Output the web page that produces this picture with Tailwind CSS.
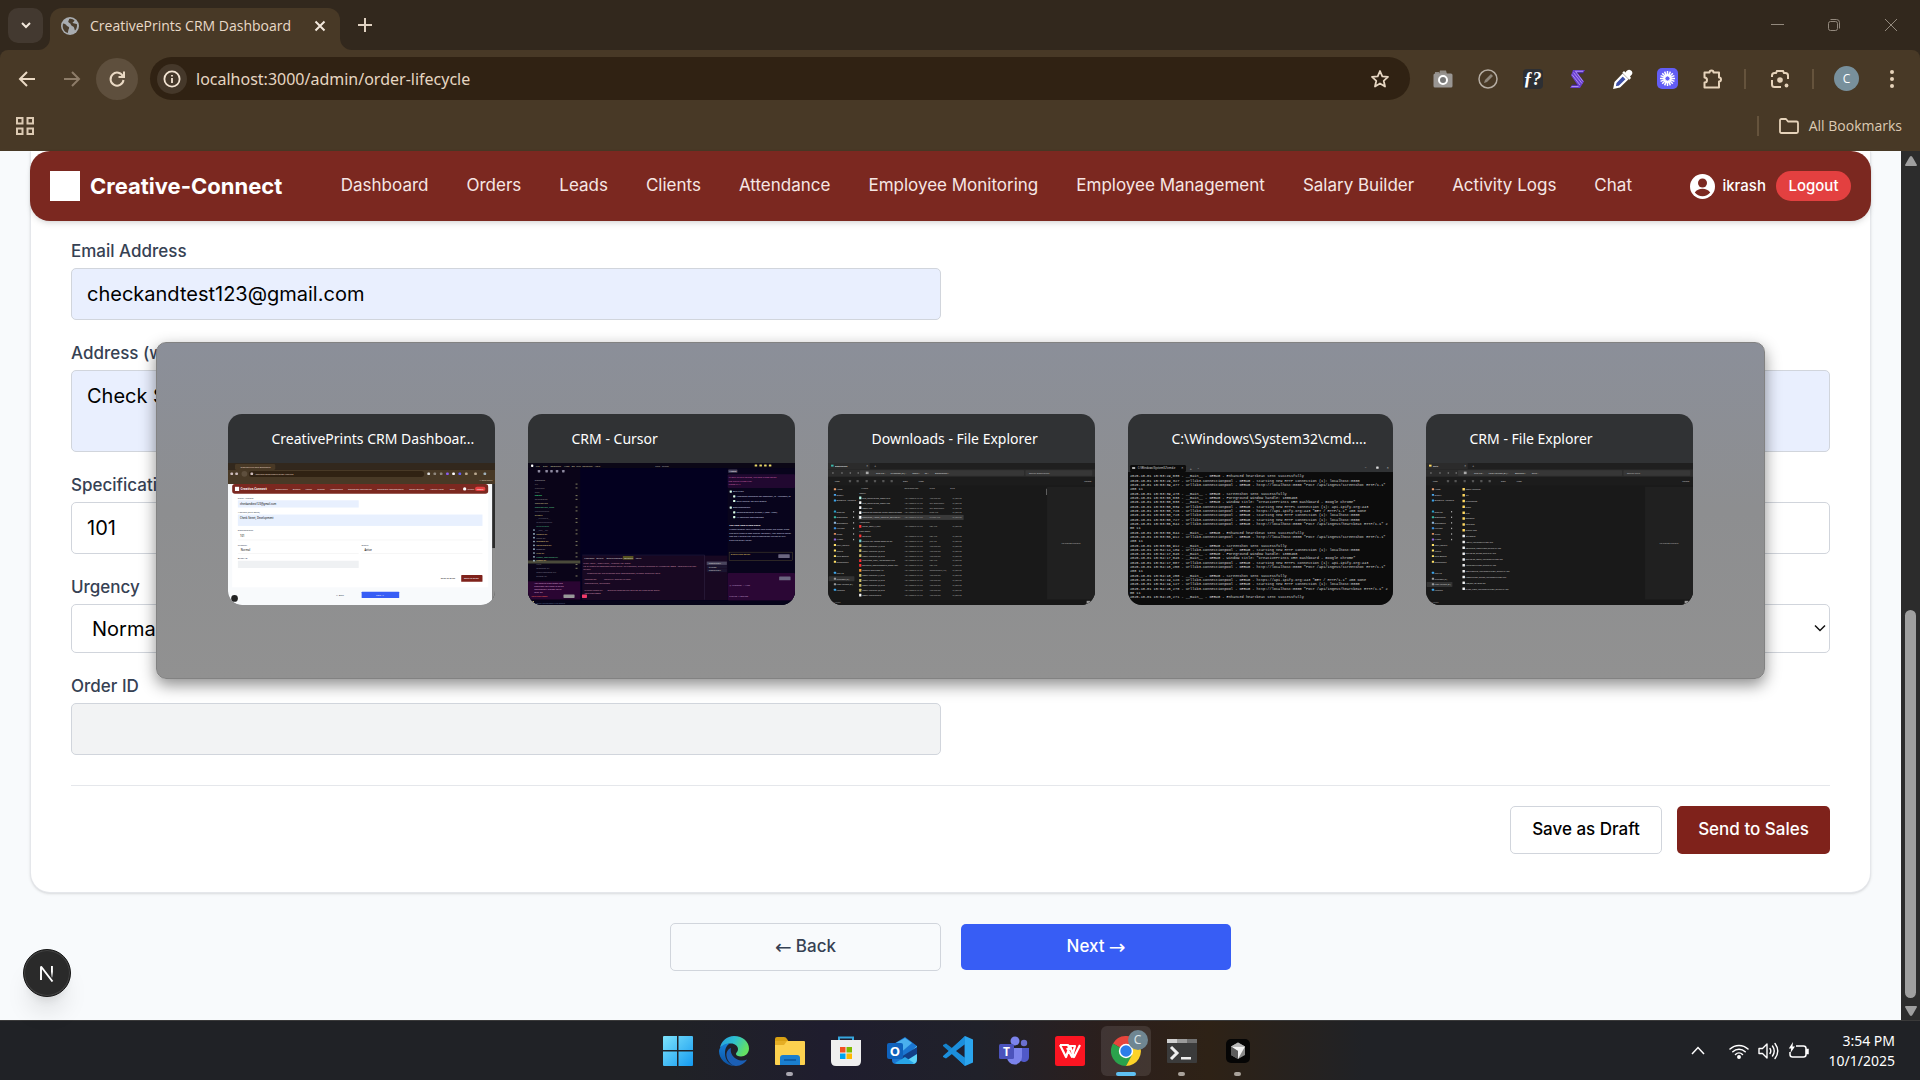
<!DOCTYPE html>
<html lang="en">
<head>
<meta charset="utf-8">
<title>CreativePrints CRM Dashboard</title>
<script src="https://cdn.jsdelivr.net/npm/@tailwindcss/browser@4"></script>
</head>
<body class="relative flex min-h-screen flex-col overflow-x-hidden bg-[#f8fafc] font-['Inter',sans-serif]">

<!-- Browser chrome -->
<header class="flex flex-col bg-[#32281d] font-['Segoe_UI','Open_Sans',sans-serif] text-[#e9d9c8]">
  <div class="flex h-[50px] items-center pl-2">
    <button aria-label="Search tabs" class="flex size-[35px] items-center justify-center rounded-[10px] bg-[#433930]">
      <svg class="size-4" viewBox="0 0 16 16" fill="none" stroke="#f3e8dc" stroke-width="2"><path d="M4 6l4 4 4-4"/></svg>
    </button>
    <div class="relative mt-2 ml-[7px] flex h-[42px] w-[290px] items-center rounded-t-xl bg-[#483926] pb-[6px] pl-[11px]">
      <svg class="absolute bottom-0 -left-3 size-3" viewBox="0 0 12 12"><path d="M12 0v12H0A12 12 0 0 0 12 0z" fill="#483926"/></svg>
      <svg class="absolute -right-3 bottom-0 size-3" viewBox="0 0 12 12"><path d="M0 0v12h12A12 12 0 0 1 0 0z" fill="#483926"/></svg>
      <svg class="size-[18px] shrink-0" viewBox="0 0 18 18"><circle cx="9" cy="9" r="9" fill="#a9adb1"/><path d="M2 6.500c2 .2 3 1 4 2.500 1.500.5 2.500 1 2 2.500-.8 1.200-.6 2.500-1.200 4.500C3.500 15 1.600 12 1.700 9zM8 2c2.500-.6 4 .2 5.500 1.500-.5 1.500-1.500 1.300-2 2.200 1 .8 2.800.6 4.500 1.500.2 3-.5 5-2 6.300-.8-1.500-.5-3-1.800-4C10.500 9 9.500 8 9.600 6.800 8.500 6 7.500 5.600 7.200 4.500 7.200 3.600 8.500 3.200 8 2z" fill="#4a3d2d"/></svg>
      <span class="ml-[11px] flex-1 text-sm whitespace-nowrap">CreativePrints CRM Dashboard</span>
      <button aria-label="Close tab" class="mr-3 flex size-4 items-center justify-center">
        <svg class="size-3" viewBox="0 0 12 12" fill="none" stroke="#f3e8dc" stroke-width="2"><path d="M1.500 1.500l9 9M10.500 1.500l-9 9"/></svg>
      </button>
    </div>
    <button aria-label="New tab" class="ml-[17px] flex size-4 items-center justify-center">
      <svg class="size-[14px]" viewBox="0 0 14 14" stroke="#e0d2c2" stroke-width="2"><path d="M7 0v14M0 7h14"/></svg>
    </button>
    <div class="ml-auto flex text-[#93897d]">
      <button aria-label="Minimize" class="flex h-10 w-[57px] items-center justify-center"><svg class="size-[14px]" viewBox="0 0 14 14" stroke="currentColor" stroke-width="1"><path d="M1 6.500h13"/></svg></button>
      <button aria-label="Restore" class="flex h-10 w-[57px] items-center justify-center"><svg class="size-[14px]" viewBox="0 0 14 14" fill="none" stroke="currentColor"><rect x="1.500" y="3.500" width="9" height="9" rx="2"/><path d="M3.500 1.500h6a3 3 0 0 1 3 3v6"/></svg></button>
      <button aria-label="Close" class="flex h-10 w-[58px] items-center justify-center"><svg class="size-[14px]" viewBox="0 0 14 14" stroke="currentColor"><path d="M1 1l12 12M13 1L1 13"/></svg></button>
    </div>
  </div>

  <div class="flex h-[57px] items-center rounded-t-lg bg-[#483926] pl-[6px]">
    <div class="flex gap-[3px]">
      <button aria-label="Back" class="flex size-[42px] items-center justify-center"><svg class="size-[18px]" viewBox="0 0 18 18" fill="none" stroke="#ead9c4" stroke-width="2"><path d="M17 9H2M9 2L2 9l7 7"/></svg></button>
      <button aria-label="Forward" class="flex size-[42px] items-center justify-center"><svg class="size-[18px]" viewBox="0 0 18 18" fill="none" stroke="#8d7c68" stroke-width="2"><path d="M1 9h15M9 2l7 7-7 7"/></svg></button>
      <button aria-label="Reload" class="flex size-[42px] items-center justify-center rounded-full bg-[#5e4f3d]"><svg class="size-[18px]" viewBox="0 0 18 18" fill="none" stroke="#ead9c4" stroke-width="2"><path d="M15 6.500A6.500 6.500 0 1 0 15.500 10"/><path d="M16 1.500V7h-5.500"/></svg></button>
    </div>
    <div class="ml-3 flex h-[43px] flex-1 items-center rounded-full bg-[#302213] pr-5 pl-[7px]">
      <button aria-label="Site information" class="flex size-[30px] items-center justify-center rounded-full bg-[#45382a]"><svg class="size-[18px]" viewBox="0 0 18 18" fill="none" stroke="#f3e4d2" stroke-width="1.800"><circle cx="9" cy="9" r="7.600"/><path d="M9 8v5M9 5v1.600"/></svg></button>
      <input aria-label="Address" value="localhost:3000/admin/order-lifecycle" class="ml-[9px] min-w-0 flex-1 bg-transparent font-['Segoe_UI','Noto_Sans',sans-serif] text-base text-[#e6d6c2] outline-none">
      <button aria-label="Bookmark this tab"><svg class="size-5" viewBox="0 0 20 20" fill="none" stroke="#e6d6c2" stroke-width="1.800" stroke-linejoin="round"><path d="M10 2l2.300 5.400 5.700.5-4.300 3.900 1.300 5.700-5-3-5 3 1.300-5.700L2 7.900l5.700-.5z"/></svg></button>
    </div>
    <div class="ml-[10px] flex items-center">
      <button aria-label="Screenshot extension" class="flex w-[45px] justify-center"><svg class="size-5" viewBox="0 0 20 20"><path d="M6 5l1-3.500h6L14 5z" fill="#8f8a84"/><path d="M2 3h4v2H2z" fill="#8f8a84"/><rect x=".5" y="4.500" width="19" height="14" rx="1.500" fill="#999693"/><circle cx="10" cy="11" r="4" fill="#777" stroke="#fff" stroke-width="2"/></svg></button>
      <button aria-label="Blocked extension" class="flex w-[45px] justify-center"><svg class="size-5" viewBox="0 0 20 20" fill="none"><circle cx="10" cy="10" r="9" stroke="#b5ada3" stroke-width="1.500"/><path d="M6 14l1-3 6-6 2 2-6 6z" fill="#8f877c"/></svg></button>
      <button aria-label="Font finder extension" class="flex w-[45px] justify-center"><span class="flex size-5 items-center justify-center rounded-sm bg-[#2d2f33] font-['Liberation_Serif',serif] text-lg leading-5 font-bold text-white italic">ƒ?</span></button>
      <button aria-label="Stripe extension" class="flex w-[45px] justify-center"><svg class="size-5" viewBox="0 0 20 20"><path d="M5 1h12l-2 3H9.500L16 12.500 12 19H2l2-3h5.500L3 6.500z" fill="#6a3fd0"/><path d="M5.500 3.500L14 14.500M8 3l7 9.500M4 5.500l8 10.500M3.500 17.500h7M7 2.300h8" stroke="#c9b3ff" stroke-width=".7" fill="none"/><path d="M9.500 4h6M4 16h5.500" stroke="#3c2480" stroke-width="1"/></svg></button>
      <button aria-label="Color picker extension" class="flex w-[45px] justify-center"><svg class="size-5" viewBox="0 0 20 20"><path d="M12.500 3.500C14 1 16 0 18 1.500S20 5 17 7.500l1 1.500-1.700 1.700-7-7L11 2z" fill="#fff"/><path d="M9.700 6L2.500 13.500 1.500 18.500l5-1L14 10.300z" fill="#3d4fa8" stroke="#fff" stroke-width="2.200"/></svg></button>
      <button aria-label="Loom extension" class="flex w-[45px] justify-center"><svg class="size-[21px]" viewBox="0 0 21 21"><rect width="21" height="21" rx="5" fill="#625df5"/><g stroke="#fff" stroke-width="1.500"><path d="M10.500 3v15M3 10.500h15M5.200 5.200l10.600 10.600M15.800 5.200L5.200 15.800M7.600 3.600l5.800 13.800M13.400 3.600L7.600 17.400M3.600 7.600l13.800 5.800M3.600 13.400l13.800-5.800"/></g><circle cx="10.500" cy="10.500" r="2.600" fill="#625df5" stroke="#fff" stroke-width="1"/></svg></button>
      <button aria-label="Extensions" class="flex w-[45px] justify-center"><svg class="size-[22px]" viewBox="0 0 22 22" fill="none" stroke="#e6d3ba" stroke-width="2" stroke-linejoin="round"><path d="M2.500 4.500h5a2 2 0 0 1 4 0h5.500v5a2 2 0 0 1 0 4v6H2.500v-5a2.500 2.500 0 0 0 0-5z"/></svg></button>
      <span class="ml-[9px] h-5 w-[2px] bg-[#65533c]"></span>
      <button aria-label="Search with Lens" class="ml-[11px] flex w-[45px] justify-center"><svg class="size-5" viewBox="0 0 20 20" fill="none" stroke="#e6d3ba" stroke-width="2"><path d="M2 8V6.500A2.500 2.500 0 0 1 4.500 4H6l1-2h6l1 2h1.500A2.500 2.500 0 0 1 18 6.500V10M2 11v4.500A2.500 2.500 0 0 0 4.500 18H11"/><circle cx="10" cy="11" r="2.800" fill="#e6d3ba" stroke="none"/><circle cx="16.500" cy="16.500" r="1.900" fill="#e6d3ba" stroke="none"/></svg></button>
      <span class="ml-[10px] h-5 w-[2px] bg-[#65533c]"></span>
      <button aria-label="Profile" class="ml-[10px] flex w-[45px] justify-center"><span class="flex size-[25px] items-center justify-center rounded-full bg-[#78909c] text-xs text-white">C</span></button>
      <button aria-label="Menu" class="mr-[6px] flex w-[45px] justify-center"><svg class="size-5" viewBox="0 0 20 20" fill="#e6d3ba"><circle cx="10" cy="3" r="2"/><circle cx="10" cy="10" r="2"/><circle cx="10" cy="17" r="2"/></svg></button>
    </div>
  </div>

  <div class="flex h-11 items-center justify-between bg-[#483926] pr-[18px] pb-[7px] pl-4">
    <button aria-label="Apps"><svg class="size-[18px]" viewBox="0 0 18 18" fill="none" stroke="#dccab3" stroke-width="2"><path d="M1 1h5.500v5.500H1zM11.500 1H17v5.500h-5.500zM1 11.500h5.500V17H1zM11.500 11.500H17V17h-5.500z"/></svg></button>
    <div class="flex items-center">
      <span class="mr-5 h-5 w-[2px] bg-[#65533c]"></span>
      <button class="flex items-center gap-[10px] text-sm whitespace-nowrap text-[#dccab3]">
        <svg class="h-4 w-5" viewBox="0 0 20 16" fill="none" stroke="#e6d3ba" stroke-width="1.800" stroke-linejoin="round"><path d="M1 13.500v-11Q1 1 2.500 1H7l2 2.500h8.500Q19 3.500 19 5v8.500Q19 15 17.500 15h-15Q1 15 1 13.500z"/></svg>
        All Bookmarks
      </button>
    </div>
  </div>
</header>

<!-- Web page -->
<div class="flex flex-1 bg-[#f8fafc]">
  <main class="relative min-w-0 flex-1 px-[30px]">
    <nav class="relative z-10 flex h-[70px] items-center justify-between rounded-[20px] bg-[#7b2820] px-5 text-[17px] whitespace-nowrap text-[#f6e6e4] shadow-md">
      <a href="#" class="flex items-center gap-[10px] text-[22px] font-bold text-white"><span class="size-[30px] bg-white"></span>Creative-Connect</a>
      <div class="flex gap-[38px]">
        <a href="#">Dashboard</a><a href="#">Orders</a><a href="#">Leads</a><a href="#">Clients</a><a href="#">Attendance</a><a href="#">Employee Monitoring</a><a href="#">Employee Management</a><a href="#">Salary Builder</a><a href="#">Activity Logs</a><a href="#">Chat</a>
      </div>
      <div class="flex items-center text-[15px] font-medium text-white">
        <svg class="size-[25px]" viewBox="0 0 25 25"><circle cx="12.500" cy="12.500" r="12.500" fill="#fff"/><circle cx="12.500" cy="9" r="4.500" fill="#7b2820"/><path d="M4.800 18.500c1.700-2.500 4.500-3.700 7.700-3.700s6 1.200 7.700 3.700a9.800 9.800 0 0 1-15.400 0z" fill="#7b2820"/></svg>
        <span class="ml-[7px]">ikrash</span>
        <button class="ml-[10px] h-[30px] w-[75px] rounded-full bg-[#e34040]">Logout</button>
      </div>
    </nav>

    <form class="-mt-[70px] flex flex-col gap-5 rounded-b-[20px] border border-[#e5e7eb] border-t-transparent bg-white px-10 pt-[86px] pb-[38px] text-[17px] font-medium text-[#364153] shadow-sm">
      <div class="grid grid-cols-2 gap-5">
        <div class="flex flex-col gap-1">
          <label for="email" class="leading-[26px]">Email Address</label>
          <input id="email" type="text" value="checkandtest123@gmail.com" class="h-[52px] rounded-[5px] border border-[#d1d5dc] bg-[#e9effe] px-[15px] text-xl font-normal text-black">
        </div>
      </div>
      <div class="flex flex-col gap-1">
        <label for="address" class="leading-[26px]">Address (with Zone)</label>
        <textarea id="address" class="h-[82px] resize-none rounded-[5px] border border-[#d1d5dc] bg-[#e9effe] px-[15px] py-[11px] text-xl font-normal text-black">Check Street, Development</textarea>
      </div>
      <div class="flex flex-col gap-1">
        <label for="spec" class="leading-[26px]">Specifications</label>
        <input id="spec" type="text" value="101" class="h-[52px] rounded-[5px] border border-[#d1d5dc] bg-white px-[15px] text-xl font-normal text-black">
      </div>
      <div class="grid grid-cols-2 gap-5">
        <div class="flex flex-col gap-1">
          <label for="urgency" class="leading-[26px]">Urgency</label>
          <select id="urgency" class="h-[49px] appearance-none rounded-[5px] border border-[#d1d5dc] bg-white px-5 text-xl font-normal text-black"><option>Normal</option></select>
        </div>
        <div class="flex flex-col gap-1">
          <label for="status" class="leading-[26px]">Status</label>
          <div class="relative flex">
            <select id="status" class="h-[49px] flex-1 appearance-none rounded-[5px] border border-[#d1d5dc] bg-white px-5 text-xl font-normal text-black"><option>Active</option></select>
            <svg class="absolute top-[18px] right-1 size-3" viewBox="0 0 12 12" fill="none" stroke="#111" stroke-width="1.500"><path d="M1 3.500l5 5 5-5"/></svg>
          </div>
        </div>
      </div>
      <div class="grid grid-cols-2 gap-5">
        <div class="flex flex-col gap-1">
          <label for="order" class="leading-[26px]">Order ID</label>
          <input id="order" type="text" disabled class="h-[52px] rounded-[5px] border border-[#d1d5dc] bg-[#f2f3f4] px-[15px] text-xl font-normal text-black">
        </div>
      </div>
      <div class="mt-[10px] flex justify-end gap-[15px] border-t border-[#e5e7eb] pt-5">
        <button type="button" class="h-12 w-[152px] rounded-[5px] border border-[#d1d5dc] bg-white text-black">Save as Draft</button>
        <button type="button" class="h-12 w-[153px] rounded-[5px] bg-[#7f221b] text-white">Send to Sales</button>
      </div>
    </form>

    <div class="mt-[30px] mb-[49px] flex justify-center gap-5 text-[17px] font-medium">
      <button class="flex h-12 w-[271px] items-center justify-center gap-1 rounded-[5px] border border-[#d1d5dc] text-[#364153]"><span class="font-['DejaVu_Sans',sans-serif] text-xl leading-none font-normal">←</span>Back</button>
      <button class="my-px flex h-[46px] w-[270px] items-center justify-center gap-1 rounded-[5px] bg-[#375df5] text-white">Next<span class="font-['DejaVu_Sans',sans-serif] text-xl leading-none font-normal">→</span></button>
    </div>

    <button aria-label="Open Next.js Dev Tools" class="absolute bottom-[23px] left-[23px] flex size-12 items-center justify-center rounded-full border border-[#171717] bg-[#2a2a2a] shadow-xl ring-1 ring-[#444] ring-inset">
      <svg class="size-[18px]" viewBox="0 0 18 18" fill="none"><defs><linearGradient id="nfade" x1="0" y1="0" x2="0" y2="1"><stop offset=".5" stop-color="#fff"/><stop offset="1" stop-color="#fff" stop-opacity=".2"/></linearGradient></defs><path d="M3 16V2.500l11.500 15" stroke="#fff" stroke-width="1.900" stroke-linejoin="bevel"/><rect x="13" y="2" width="1.900" height="11.500" fill="url(#nfade)"/></svg>
    </button>
  </main>
  <div class="flex w-[19px] flex-col items-center bg-[#2c2c2c]">
    <svg class="mt-[5px] h-[10px] w-3" viewBox="0 0 12 10"><path d="M6 0Q7 0 8 2l4 7q0 1-1 1H1Q0 10 0 9l4-7Q5 0 6 0z" fill="#9f9f9f"/></svg>
    <div class="mt-auto h-[388px] w-[11px] rounded-full bg-[#9f9f9f]"></div>
    <svg class="mt-2 mb-1 h-[10px] w-3" viewBox="0 0 12 10"><path d="M6 10Q5 10 4 8L0 1Q0 0 1 0h10q1 0 1 1L8 8Q7 10 6 10z" fill="#9f9f9f"/></svg>
  </div>
</div>

<!-- Alt-tab window switcher -->
<section aria-label="Task switcher" class="absolute inset-x-0 top-0 bottom-[60px] z-20 flex items-center justify-center font-['Segoe_UI','Noto_Sans',sans-serif] text-sm text-white">
  <div class="flex gap-[33px] rounded-[10px] border border-[#828282] bg-linear-to-b from-[#8b8f99] via-[#8d8e90] via-50% to-[#919191] px-[71px] pt-[71px] pb-[73px] shadow-[0_6px_16px_rgba(0,0,0,0.45)]">
    <article class="w-[267px] overflow-hidden rounded-[14px] bg-[#303234]">
      <h2 class="h-[49px] truncate pl-11 leading-[49px]">CreativePrints CRM Dashboar...</h2>
      <svg id="t1" class="h-[142px] w-full" viewBox="0 0 1920 1020" preserveAspectRatio="none"></svg>
    </article>
    <article class="w-[267px] overflow-hidden rounded-[14px] bg-[#303234]">
      <h2 class="h-[49px] truncate pl-11 leading-[49px]">CRM - Cursor</h2>
      <svg id="t2" class="h-[142px] w-full" viewBox="0 0 1920 1020" preserveAspectRatio="none"></svg>
    </article>
    <article class="w-[267px] overflow-hidden rounded-[14px] bg-[#303234]">
      <h2 class="h-[49px] truncate pl-11 leading-[49px]">Downloads - File Explorer</h2>
      <svg id="t3" class="h-[142px] w-full" viewBox="0 0 1920 1020" preserveAspectRatio="none"></svg>
    </article>
    <article class="w-[265px] overflow-hidden rounded-[14px] bg-[#303234]">
      <h2 class="h-[49px] truncate pl-11 leading-[49px]">C:\Windows\System32\cmd....</h2>
      <svg id="t4" class="h-[142px] w-full" viewBox="0 0 1920 1020" preserveAspectRatio="none"></svg>
    </article>
    <article class="w-[267px] overflow-hidden rounded-[14px] bg-[#303234]">
      <h2 class="h-[49px] truncate pl-11 leading-[49px]">CRM - File Explorer</h2>
      <svg id="t5" class="h-[142px] w-full" viewBox="0 0 1920 1020" preserveAspectRatio="none"></svg>
    </article>
  </div>
</section>

<!-- Taskbar -->
<footer class="grid h-[60px] grid-cols-[1fr_auto_1fr] items-center border-t border-[#3a3a3a] bg-[linear-gradient(90deg,#202226_35%,#1f1d2e_43%,#20212a_51%,#2c1f1c_58%,#2e2216_63%,#202226_71%)] pr-[5px] font-['Segoe_UI','Noto_Sans',sans-serif] text-white">
  <div></div>
  <div class="flex items-center gap-[6px]">
    <button aria-label="Start" class="flex h-[50px] w-[50px] items-center justify-center"><svg class="size-[30px]" viewBox="0 0 30 30"><defs><linearGradient id="wg" x1="0" y1="0" x2="1" y2="1"><stop stop-color="#7de3fb"/><stop offset="1" stop-color="#149af0"/></linearGradient></defs><path d="M0 1q0-1 1-1h13v14H0zM15.500 0H29q1 0 1 1v13H15.500zM0 15.500h14V30H1q-1 0-1-1zM15.500 15.500H30V29q0 1-1 1H15.500z" fill="url(#wg)"/></svg></button>
    <button aria-label="Microsoft Edge" class="flex h-[50px] w-[50px] items-center justify-center"><svg class="size-[30px]" viewBox="0 0 30 30"><defs><linearGradient id="eg" x1="0" y1="0" x2="1" y2=".4"><stop stop-color="#259ae0"/><stop offset=".5" stop-color="#2dc0d0"/><stop offset="1" stop-color="#63e063"/></linearGradient><linearGradient id="eb" x1="0" y1="0" x2="0" y2="1"><stop stop-color="#1680d8"/><stop offset="1" stop-color="#0c4f9f"/></linearGradient></defs><path d="M1 12C2 5 8 0 15 0c9 0 15 6 15 12.500 0 5-4 8-8 8-3 0-5-1-5-2.500s2-2 2-5c0-3-3-5.500-7-5.500C7 7.500 3 10 1 12z" fill="url(#eg)"/><path d="M1 12c2-3 6-5 10-4.500-4 2-5 6-5 10 0 6 4 11 10 12.500C7 30 0 23 0 15c0-1 .5-2 1-3z" fill="url(#eb)"/><path d="M12 12c-3 1-5 4-4.500 8 .8 6 6 10 9.500 10 5 0 9-3 11-6.500-3 1.500-7 1.500-10.500-.5C13 20.500 11 16 12 12z" fill="#1b5fb5"/></svg></button>
    <button aria-label="File Explorer" class="relative flex h-[50px] w-[50px] items-center justify-center"><svg class="h-[28px] w-[30px]" viewBox="0 0 30 28"><path d="M0 2q0-2 2-2h7q2 0 3 2l2 3H0z" fill="#d8a013"/><path d="M0 5q0-1 1-1h28q1 0 1 1v22q0 1-1 1H1q-1 0-1-1z" fill="#fcd14f"/><path d="M0 4l12 0-3 4H0z" fill="#e5ae25"/><path d="M5 21q0-3 3-3h14q3 0 3 3v7H5z" fill="#1a7ecf"/><path d="M9 22h12v2H9z" fill="#0e5ea8"/></svg><span class="absolute bottom-0 h-1 w-[7px] rounded-full bg-[#a9a7b0]"></span></button>
    <button aria-label="Microsoft Store" class="flex h-[50px] w-[50px] items-center justify-center"><svg class="size-[30px]" viewBox="0 0 30 30"><path d="M8 6V1.500h14V6" fill="none" stroke="#36a6dd" stroke-width="2"/><path d="M0 4h30v21q0 5-5 5H5q-5 0-5-5z" fill="#efefef"/><path d="M9 11h5.500v5.500H9z" fill="#f25022"/><path d="M15.500 11H21v5.500h-5.500z" fill="#7fba00"/><path d="M9 17.500h5.500V23H9z" fill="#00a4ef"/><path d="M15.500 17.500H21V23h-5.500z" fill="#ffb900"/></svg></button>
    <button aria-label="Outlook" class="flex h-[50px] w-[50px] items-center justify-center"><svg class="size-[30px]" viewBox="0 0 30 30"><path d="M5 9L18 1l12 9v14q0 4-4 4H9q-4 0-4-4z" fill="#1b76d1"/><path d="M7 8l11-6 7 5-13 11z" fill="#4ab0ee"/><path d="M30 10v13q0 5-5 5H10z" fill="#5ed3f8"/><path d="M30 11L14 21v7l16-10z" fill="#123f87"/><path d="M8 27l10-6 9 6q-1 1-3 1H11q-2 0-3-1z" fill="#28a5e8"/><rect y="7" width="16" height="16" rx="2" fill="#0f62bd"/><text x="8" y="20" text-anchor="middle" font-family="Open Sans, sans-serif" font-size="13" font-weight="700" fill="#fff">O</text></svg></button>
    <button aria-label="Visual Studio Code" class="flex h-[50px] w-[50px] items-center justify-center"><svg class="size-[30px]" viewBox="0 0 30 30"><path d="M22 0l-13 12L3 7.500 0 9v1l19 17 3 3z" fill="#1583cc"/><path d="M22 30L9 18l-6 4.500L0 21v-1L19 3l3-3z" fill="#1c8fdc"/><path d="M22 0l8 3.500v23L22 30z" fill="#2ba5ee"/><path d="M21.500 8.500v13L13 15z" fill="#1f2030"/></svg></button>
    <button aria-label="Microsoft Teams" class="flex h-[50px] w-[50px] items-center justify-center"><svg class="size-[30px]" viewBox="0 0 30 30"><circle cx="25" cy="7" r="3.200" fill="#6a70cf"/><circle cx="16" cy="5" r="4.500" fill="#7b83eb"/><path d="M21 12h9v9a5 5 0 0 1-9 3z" fill="#5059c9"/><path d="M8 12h15v9a7.500 7.500 0 0 1-15 0z" fill="#7b83eb"/><rect y="8" width="15" height="15" rx="1.500" fill="#4b53bc"/><text x="7.500" y="20" text-anchor="middle" font-family="Open Sans, sans-serif" font-size="12" font-weight="700" fill="#fff">T</text></svg></button>
    <button aria-label="WPS Office" class="flex h-[50px] w-[50px] items-center justify-center"><svg class="size-[30px]" viewBox="0 0 30 30"><rect width="30" height="30" rx="2.500" fill="#fb1522"/><path d="M5 9h8l2 5M5 9l6 12 4-11h5l-3 11-5-9M15 10l4 11 6-12" fill="none" stroke="#fff" stroke-width="2.200" stroke-linejoin="round"/></svg></button>
    <button aria-label="Google Chrome" class="relative flex h-[50px] w-[50px] items-center justify-center rounded-md bg-white/10"><svg class="size-[30px]" viewBox="0 0 30 30"><path d="M15 15L2 7.500A15 15 0 0 1 28 7.500z" fill="#e8453c"/><path d="M15 15L2 7.500A15 15 0 0 0 15 30l6.500-11z" fill="#2aa24c"/><path d="M15 8h13.200A15 15 0 0 1 15 30l6-11z" fill="#fdd329"/><circle cx="15" cy="15" r="7.200" fill="#fff"/><circle cx="15" cy="15" r="5.700" fill="#2b7de9"/></svg><span class="absolute top-1 right-[3px] flex size-5 items-center justify-center rounded-full bg-[#6f8692] text-xs text-[#dce4e8]">C</span><span class="absolute bottom-0 h-1 w-5 rounded-full bg-[#5fc0f2]"></span></button>
    <button aria-label="Command Prompt" class="relative flex h-[50px] w-[50px] items-center justify-center"><svg class="h-6 w-[30px]" viewBox="0 0 30 24"><rect width="30" height="24" rx="1" fill="#3b3b3b"/><path d="M0 0h10v4H0z" fill="#d0d0d0"/><path d="M10 0h10v4H10z" fill="#9b9b9b"/><path d="M20 0h10v4H20z" fill="#707070"/><path d="M4 8l6 6-6 6" fill="none" stroke="#eee" stroke-width="3"/><path d="M14 18h10v2.500H14z" fill="#eee"/></svg><span class="absolute bottom-0 h-1 w-[7px] rounded-full bg-[#a9a29b]"></span></button>
    <button aria-label="Cursor" class="relative flex h-[50px] w-[50px] items-center justify-center"><svg class="size-6" viewBox="0 0 24 24"><rect width="24" height="24" rx="5" fill="#050505"/><path d="M12 3.500l7 4v8.500l-7 4-7-4V7.500z" fill="#8a8a8a"/><path d="M5 7.500h14L12 20v-8z" fill="#f1f1f1"/><path d="M5 7.500L12 12v8l-7-4z" fill="#5c5c5c"/><path d="M12 3.500l7 4H5z" fill="#b5b5b5"/></svg><span class="absolute bottom-0 h-1 w-[7px] rounded-full bg-[#a9a29b]"></span></button>
  </div>
  <div class="flex items-center justify-end pr-5">
    <button aria-label="Show hidden icons" class="mr-6"><svg class="h-[9px] w-[14px]" viewBox="0 0 14 9" fill="none" stroke="#fff" stroke-width="1.500"><path d="M1 8l6-6.500L13 8"/></svg></button>
    <button aria-label="Network, volume and battery" class="mr-5 flex items-center gap-[9px]">
      <svg class="h-4 w-5" viewBox="0 0 20 16" fill="none" stroke="#fff" stroke-width="1.500" stroke-linecap="round"><path d="M1 6a13 13 0 0 1 18 0M3.800 8.800a9 9 0 0 1 12.400 0M6.500 11.500a5 5 0 0 1 7 0"/><circle cx="10" cy="14" r="1.200" fill="#fff"/></svg>
      <svg class="h-[18px] w-[21px]" viewBox="0 0 21 18" fill="none" stroke="#fff" stroke-width="1.400" stroke-linecap="round" stroke-linejoin="round"><path d="M1 6.500h3.500L9 2v14l-4.500-4.500H1zM12 6.500q1.600 2.500 0 5M14.500 4q3.500 5 0 10M17 1.500q5.500 7.500 0 15"/></svg>
      <svg class="h-[18px] w-[21px]" viewBox="0 0 21 18" fill="none" stroke="#fff" stroke-width="1.500"><path d="M8 4h7.500Q18 4 18 6.500v6q0 2.500-2.500 2.500h-11Q2 15 2 12.500V10"/><path d="M18.500 7.500H20v4h-1.500z" fill="#fff"/><path d="M5 0L.8 6.500h2.400L2.500 11 7 4.500H4.500z" fill="#fff" stroke="none"/></svg>
    </button>
    <div class="text-right text-sm leading-5 whitespace-nowrap"><div>3:54 PM</div><div>10/1/2025</div></div>
  </div>
</footer>

<script>
const rect = (x, y, w, h, fill, rx = 0) => `<rect x="${x}" y="${y}" width="${w}" height="${h}" fill="${fill}" rx="${rx}"/>`;
const text = (x, y, s, fill, size = 20, extra = '') => `<text x="${x}" y="${y}" fill="${fill}" font-size="${size}" ${extra}>${s}</text>`;
const put = (id, html) => { document.getElementById(id).innerHTML = html; };

// Browser window preview
(() => {
  let s = rect(0, 0, 1920, 50, '#32281d') + rect(50, 8, 290, 42, '#483926', 10) + rect(0, 50, 1920, 101, '#483926')
    + rect(150, 57, 1260, 43, '#302213', 21) + `<circle cx="118" cy="78" r="21" fill="#5e4f3d"/>`
    + text(90, 34, 'CreativePrints CRM Dashboard', '#e9d9c8', 15) + text(197, 85, 'localhost:3000/admin/order-lifecycle', '#e6d6c2', 16)
    + text(1807, 131, 'All Bookmarks', '#dccab3', 14);
  [[1443, '#ddd'], [1487, '#8f877c'], [1533, '#8f877c'], [1578, '#8c5cf0'], [1622, '#fff'], [1667, '#625df5'], [1714, '#b9a88f'], [1780, '#b9a88f'], [1847, '#9fb0b8'], [171, '#cbb'], [27, '#cbb'], [62, '#cbb']]
    .forEach(([x, c]) => s += rect(x - 9, 69, 18, 18, c, 5));
  s += rect(0, 151, 1901, 869, '#f8fafc') + rect(30, 151, 1841, 742, '#fff') + rect(30, 151, 1841, 70, '#7b2820', 20)
    + rect(50, 171, 30, 30, '#fff') + text(90, 195, 'Creative-Connect', '#fff', 22, 'font-weight="700"');
  [[341, 'Dashboard'], [466, 'Orders'], [557, 'Leads'], [642, 'Clients'], [734, 'Attendance'], [863, 'Employee Monitoring'], [1073, 'Employee Management'], [1303, 'Salary Builder'], [1452, 'Activity Logs'], [1594, 'Chat'], [1722, 'ikrash']]
    .forEach(([x, t]) => s += text(x, 193, t, '#f6e6e4', 17));
  s += `<circle cx="1702" cy="186" r="12" fill="#fff"/>` + rect(1776, 171, 75, 30, '#e34040', 15) + text(1788, 192, 'Logout', '#fff', 15);
  [[71, 256, 'Email Address'], [71, 359, 'Address (with Zone)'], [71, 491, 'Specifications'], [71, 593, 'Urgency'], [960, 593, 'Status'], [71, 691, 'Order ID']]
    .forEach(([x, y, t]) => s += text(x, y, t, '#364153', 17));
  s += rect(71, 268, 869, 52, '#e8f0fe') + rect(71, 370, 1759, 82, '#e8f0fe') + rect(71, 702, 869, 52, '#eff1f3')
    + rect(71, 552, 1759, 2, '#ddd') + rect(71, 651, 869, 2, '#ddd') + rect(960, 651, 870, 2, '#ddd')
    + text(87, 301, 'checkandtest123@gmail.com', '#000', 19) + text(87, 403, 'Check Street, Development', '#000', 19) + text(87, 535, '101', '#000', 19) + text(92, 635, 'Normal', '#000', 19) + text(981, 635, 'Active', '#000', 19)
    + text(1530, 835, 'Save as Draft', '#111', 17) + rect(1677, 805, 153, 48, '#7f221b', 4) + text(1697, 835, 'Send to Sales', '#fff', 17)
    + text(775, 953, '← Back', '#364153', 17) + rect(961, 924, 270, 46, '#375df5', 4) + text(1064, 953, 'Next →', '#fff', 17)
    + `<circle cx="47" cy="973" r="24" fill="#222"/>` + rect(1901, 151, 19, 460, '#2c2c2c') + rect(1901, 611, 19, 409, '#909090');
  put('t1', s);
})();

// Editor window preview
(() => {
  let s = rect(0, 0, 1920, 1020, '#03001f') + rect(0, 0, 1920, 36, '#0b0716') + rect(0, 36, 376, 960, '#0a0418')
    + rect(390, 665, 1046, 320, '#180822') + rect(1436, 36, 484, 950, '#08041c') + rect(1436, 80, 484, 100, '#210830', 8)
    + rect(1436, 790, 484, 200, '#2b0735', 8) + rect(0, 850, 376, 130, '#2a0532') + rect(0, 700, 376, 22, '#4a4a3a') + rect(0, 988, 1920, 32, '#06041a') + rect(18, 992, 24, 28, '#f4e18c')
    + rect(390, 660, 880, 2, '#4b4368') + rect(1270, 662, 2, 320, '#4b4368');
  ['File', 'Edit', 'Selection', 'View', 'Go', 'Run', 'Terminal', 'Help'].reduce((x, t) => (s += text(x, 26, t, '#c9c2a0', 18), x + t.length * 9 + 17), 55);
  s += rect(22, 10, 16, 18, '#fff', 5) + text(915, 26, 'CRM - Cursor', '#aaa', 16);
  [0, 1, 2, 3].forEach(i => s += rect(1630 + i * 34, 10, 18, 16, '#e7d667', 3));
  [70, 125, 160, 200, 245].forEach(x => s += rect(x, 50, 18, 18, '#8e8aa0', 3));
  [['frontend', '#aaa'], ['src', '#666'], ['backend', '#777'], ['logs', '#777'], ['media', '#4f9'], ['migrations', '#888'], ['monitoring', '#c9c08a'], ['monitoring_data', '#5c8'], ['notifications', '#667'], ['orders', '#d8c878'], ['__pycache__', '#667'], ['management', '#667'], ['migrations', '#4a7'], ['__init__.py', '#778'], ['admin.py', '#e4d487'], ['apps.py', '#888'], ['models.py', '#e4d487'], ['serializers.py', '#e4d487'], ['tests.py', '#99a'], ['urls.py', '#e4d487'], ['views_workflow.py', '#5c8'], ['views.py', '#e4d487'], ['utils', '#667'], ['manage.py', '#778'], ['requirements.txt', '#778'], ['pytest.ini', '#778']]
    .forEach(([t, c], i) => { s += text(i > 9 ? 60 : 48, 130 + i * 27.500, t, c, 18); if (i > 12 && i < 22) s += rect(38, 118 + i * 27.500, 10, 12, '#bde', 4); if (i % 3) s += rect(342, 120 + i * 27.500, 14, 8, '#77745a'); });
  s += rect(1440, 46, 66, 24, '#4a465e', 4) + text(1448, 65, 'Agent', '#eee', 18);
  ['In reply style of course, the CRM is now tested.', 'The status is now Live!', 'Please try it'].forEach((t, i) => s += text(1442, 110 + i * 24, t, '#d46ab0', 16));
  [[210, 'Bug Fixes'], [245, 'Attendant endpoint for company_id - updated_at'], [278, 'CRM display for this record'], [325, 'Documentation'], [360, 'Comprehensive guides (1,500+ lines)'], [393, 'All features documented']]
    .forEach(([y, t], i) => s += rect(i % 3 ? 1475 : 1450, y - 13, 16, 16, '#d9fbe6', 3) + text(i % 3 ? 1500 : 1474, y, t, '#d5dae8', 17));
  s += text(1448, 452, 'The CRM now is now fixed!', '#fff', 17, 'font-weight="700"');
  ['Please refresh your browser and check the order page', 'the CRM should now display correctly; you should never', 'see the x object the data placeholder values or null', 'else the other issue!'].forEach((t, i) => s += text(1448, 484 + i * 25, t, '#cfd3e2', 17));
  s += `<rect x="1446" y="640" width="456" height="60" fill="none" stroke="#8a7f3c" stroke-width="2"/>` + text(1458, 664, 'Single-side server', '#e7d667', 17) + rect(1800, 655, 82, 28, '#6b6680', 4) + rect(1806, 815, 82, 28, '#6b6680', 4)
    + text(1448, 880, '@ browser  + Auto', '#b98fc0', 18) + text(1448, 965, 'claude-4-sonnet', '#b98fc0', 18);
  ['Problems', 'Output', 'Debug Console', 'Terminal', 'Ports'].forEach((t, i) => s += (i === 3 ? rect(682, 668, 76, 26, '#57521f') : '') + text([405, 490, 565, 690, 775][i], 688, t, '#ddd', 16));
  ['Type "help", "copyright", "credits" for more.', 'PS C:/Users/pc/Desktop/work/CRM> cd backend; python manage.py runserver 8000 --settings crm.dev', 'myenv', '      Watching for file changes with StatReloader, system checking CRM', '', '  categories:            found 24 entries in total', '  background, migration', '', '  python agent.py        Starting monitoring-service for employee Email', '  localhost:8000']
    .forEach((t, i) => s += text(398, 724 + i * 24, t, '#c78aa6', 17, 'xml:space="preserve"'));
  ['powershell', 'python', 'powershell'].forEach((t, i) => s += rect(1285, 708 + i * 26, 145, 24, i ? '#1b1530' : '#4a465e') + text(1300, 726 + i * 26, t, '#ccc', 17));
  ['You should also check the', 'program you have in mind', 'additionally please verify', 'with git'].forEach((t, i) => s += text(45, 870 + i * 22, t, '#d9a0d0', 17));
  s += rect(255, 945, 80, 24, '#999', 4) + rect(388, 945, 36, 24, '#f03b6a', 4) + text(24, 965, 'localhost:3000', '#e05c50', 17) + text(60, 1010, 'main   Launchpad   Live Share', '#5e7090', 16);
  put('t2', s);
})();

// File Explorer previews
const explorer = (tab, crumbs, search, selected) => {
  let s = rect(0, 0, 1920, 1020, '#191919') + rect(0, 0, 1920, 45, '#1f1f1f') + rect(0, 0, 300, 45, '#2b2b2b') + rect(0, 45, 1920, 55, '#2c2c2c') + rect(230, 52, 1180, 40, '#373737', 5) + rect(1420, 52, 480, 40, '#373737', 5)
    + rect(0, 100, 1920, 62, '#1c1c1c') + rect(1575, 170, 345, 810, '#202020') + rect(0, 985, 1920, 35, '#171717')
    + text(1680, 580, 'No preview available.', '#bbb', 14) + text(50, 26, tab, '#fff', 17) + rect(22, 12, 18, 14, tab === 'CRM' ? '#ffd75e' : '#3bb6a9')
    + text(1445, 77, search, '#bbb', 17) + rect(272, 62, 20, 18, '#aaa') + text(48, 138, 'New', '#ccc', 17) + text(540, 138, 'Sort', '#ccc', 17) + text(650, 138, 'View', '#ccc', 17) + text(1842, 138, 'Preview', '#ccc', 14)
    + text(275, 26, '×', '#bbb', 24) + text(333, 26, '+', '#bbb', 24) + text(30, 1008, '26 items', '#999', 15) + rect(1860, 990, 28, 25, '#999');
  [150, 205, 270, 330, 390, 450].forEach(x => s += rect(x, 123, 16, 16, '#555', 3));
  [30, 95, 155, 212].forEach(x => s += rect(x, 66, 11, 11, '#777', 3));
  crumbs.forEach(([x, t]) => s += text(x, 77, t + '  ›', '#ddd', 17));
  s += rect(5, selected - 18, 185, 36, '#333', 4);
  [['Home', '#e79c6b', 190], ['Gallery', '#4aa3e8', 230], ['OneDrive - Personal', '#3ca4e8', 270], ['Desktop', '#2ba0c8', 350], ['Downloads', '#38b59f', 390], ['Documents', '#8fb5d8', 430], ['Pictures', '#3b8fe0', 470], ['Music', '#d98a5b', 510], ['Videos', '#9167d9', 550], ['daily_reports', '#ffe066', 590], ['Mobile', '#ffe066', 630], ['CRM Backup', '#ffe066', 670], ['Screenshots', '#ffe066', 710], ['This PC', '#3ca4e8', 790], ['Windows (C:)', '#999', 832], ['New Volume (D:)', '#999', 872], ['Network', '#3ca4e8', 912]]
    .forEach(([t, c, y], i) => { s += rect(42, y - 8, 16, 14, c, 2) + text(62, y + 6, t, '#ccc', 15); if (i > 2 && i < 9) s += rect(180, y - 5, 8, 10, '#aaa'); });
  return s;
};
(() => {
  let s = explorer('Downloads', [[345, 'This PC'], [450, 'Windows (C:)'], [605, 'Users'], [695, 'pc'], [770, 'Downloads']], 'Search Downloads', 832);
  s += text(240, 188, 'Name', '#bbb', 17) + text(550, 188, 'Date modified', '#bbb', 15) + text(730, 188, 'Type', '#bbb', 17) + text(880, 188, 'Size', '#bbb', 17) + rect(215, 373, 760, 36, '#3a3a3a');
  [['crm_monitoring_agent.exe', 256, 'Application', '#bfe'], ['crm_monitoring_agent.log', 291, 'Text Document', '#fff'], ['agent.log', 327, 'Text Document', '#fff'], ['employee-desktop-client-monitor.spec', 362, 'SPEC File', '#fff'], ['Employee_Agent_Monitor_Service.py', 397, 'Python File', '#fff'], ['Policy_Doc (1).pdf', 462, 'PDF File', '#f33'], ['CRM.pdf', 530, 'PDF File', '#f33'], ['WhatsApp Image 2025-09-29', 565, 'JPG File', '#7cc'], ['agent-installer (4).exe', 600, 'Application', '#cb6'], ['agent-installer (3).exe', 636, 'Application', '#cb6'], ['agent-installer (2).exe', 672, 'Application', '#cb6'], ['Workflow_Web_Assignment.pdf', 707, 'PDF File', '#f33'], ['Software_Requirements_Sheet.pdf', 742, 'PDF File', '#f33'], ['sample-workflow.zip', 778, 'Compressed (zip)', '#f93'], ['agent-installer (1).exe', 813, 'Application', '#cb6'], ['agent-installer (7).exe', 850, 'Application', '#cb6'], ['agent-installer (6).exe', 885, 'Application', '#cb6'], ['agent-installer (5).exe', 920, 'Application', '#cb6'], ['agent-installer.exe', 955, 'Application', '#fff']]
    .forEach(([t, y, k, c]) => s += rect(224, y - 16, 16, 20, c, 2) + text(246, y, t, '#ccc', 16) + text(550, y, '10/1/2025 3:46 PM', '#aaa', 15) + text(730, y, k, '#aaa', 15) + text(895, y, '34,582 KB', '#aaa', 14));
  s += text(225, 222, 'Today', '#ccc', 17) + text(225, 432, 'Yesterday', '#ccc', 17) + text(225, 496, 'Last week', '#ccc', 17) + rect(1568, 185, 4, 45, '#999');
  put('t3', s);
  s = explorer('CRM', [[345, 'This PC'], [450, 'New Volume (D:)'], [640, 'Backend'], [760, 'CRM']], 'Search CRM', 872);
  ['agent-installer', '.git', 'attendance', 'client', 'crm', 'backend', 'frontend', 'clients-app', '.gitignore', 'AGENT_IMPLEMENTATION.md', 'COMPLETE_WORKFLOW_SUMMARY.md', 'EMPLOYEE_GUIDE_SUMMARY.md', 'EMPLOYEE_FORM_IMPLEMENTATION.md', 'IMPLEMENTATION_SUMMARY.md', 'MONITORING_IMPLEMENTATION_SUMMARY.md', 'PRODUCTION_GUIDE_IMPLEMENTATION.md', 'PROJECT_README.md', 'SALES_FLOW_IMPLEMENTATION_SUMMARY.md']
    .forEach((t, i) => s += rect(262, 180 + i * 42, 18, 18, i < 8 ? '#ffd75e' : '#eee', 2) + text(284, 195 + i * 42, t, '#ccc', i < 9 ? 16 : 14));
  put('t5', s);
})();

// Terminal preview
(() => {
  let s = rect(0, 0, 1920, 1020, '#0c0c0c') + rect(0, 0, 1920, 65, '#303234') + rect(15, 14, 405, 51, '#0c0c0c', 10) + text(70, 46, 'C:\\Windows\\System32\\cmd.e', '#ddd', 20) + rect(30, 30, 22, 12, '#ccc')
    + text(385, 46, '×', '#ccc', 26) + text(448, 48, '+', '#ccc', 26) + text(500, 44, '⌄', '#ccc', 22) + text(1715, 46, '−', '#ccc', 24) + rect(1798, 26, 18, 16, '#ddd', 3) + text(1875, 46, '×', '#ccc', 26);
  const M = '__main__', U = 'urllib3.connectionpool', E = 'Enhanced heartbeat sent successfully', S = 'Screenshot sent successfully', C = 'Starting new HTTP connection (1): localhost:8000', H = 'Starting new HTTPS connection (1): api.ipify.org:443', F = 'Foreground window handle: 1380468', W = 'Window title: "CreativePrints CRM Dashboard - Google Chrome"', G = 'https://api.ipify.org:443 "GET / HTTP/1.1" 200 None', P = 'http://localhost:8000 "POST /api/ingest/screenshot HTTP/1.1"', B = 'http://localhost:8000 "POST /api/ingest/heartbeat HTTP/1.1" 2';
  [['15:53:29,035', M, E], ['15:53:29,327', U, C], ['15:53:39,477', U, P], '200 11', ['15:53:39,478', M, S], ['15:53:50,038', M, F], ['15:53:50,038', M, W], ['15:53:50,039', U, H], ['15:53:50,726', U, G], ['15:53:50,728', U, C], ['15:53:50,727', U, C], ['15:53:56,044', U, B], '00 11', ['15:53:56,044', M, E], ['15:53:56,912', U, P], '200 11', ['15:53:56,912', M, S], ['15:54:14,189', U, C], ['15:54:17,046', M, F], ['15:54:17,046', M, W], ['15:54:17,087', U, H], ['15:54:18,250', U, P], '200 11', ['15:54:18,250', M, S], ['15:54:19,126', U, G], ['15:54:19,127', U, C], ['15:54:25,270', U, B], '00 11', ['15:54:25,271', M, E]]
    .forEach((l, i) => s += text(14, 104 + i * 31, typeof l === 'string' ? l : `2025-10-01 ${l[0]} - ${l[1]} - DEBUG - ${l[2]}`, '#d8d8d8', 26, 'font-family="Liberation Mono, monospace"'));
  put('t4', s);
})();
</script>
</body>
</html>
